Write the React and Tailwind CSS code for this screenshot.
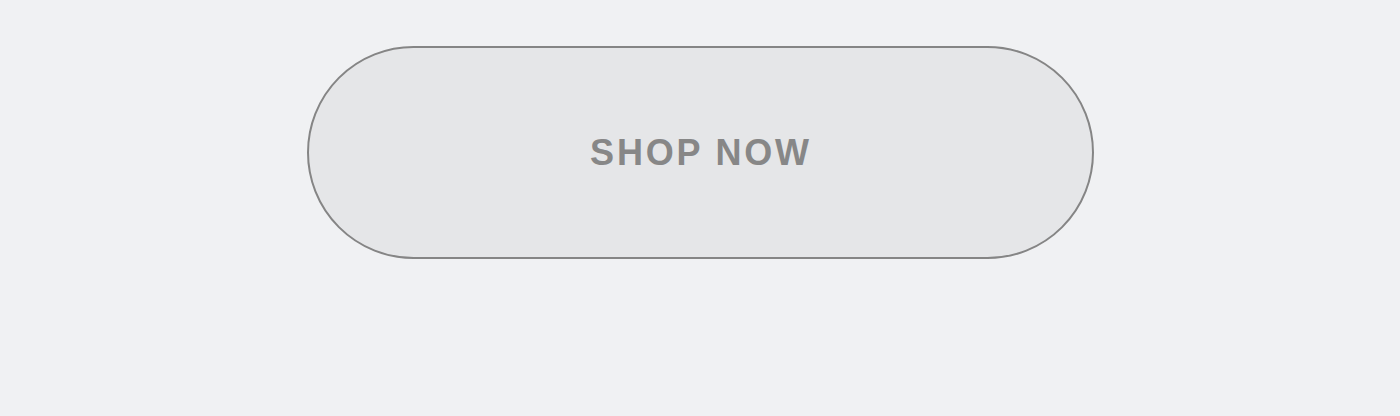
import React from 'react'

const App = () => {
    return (
        <div className="w-full min-h-screen bg-[#f0f1f3] flex justify-center pt-[46px]">
            <button
                type="button"
                className="w-[787px] h-[213px] rounded-full border-2 border-[#858585] bg-[#e5e6e8] flex items-center justify-center cursor-pointer"
            >
                <span className="font-['Liberation_Sans',Arial,sans-serif] font-bold text-[36px] tracking-[2.8px] text-[#878787] leading-none pl-[2px]">
                    SHOP NOW
                </span>
            </button>
        </div>
    )
}

export default App
